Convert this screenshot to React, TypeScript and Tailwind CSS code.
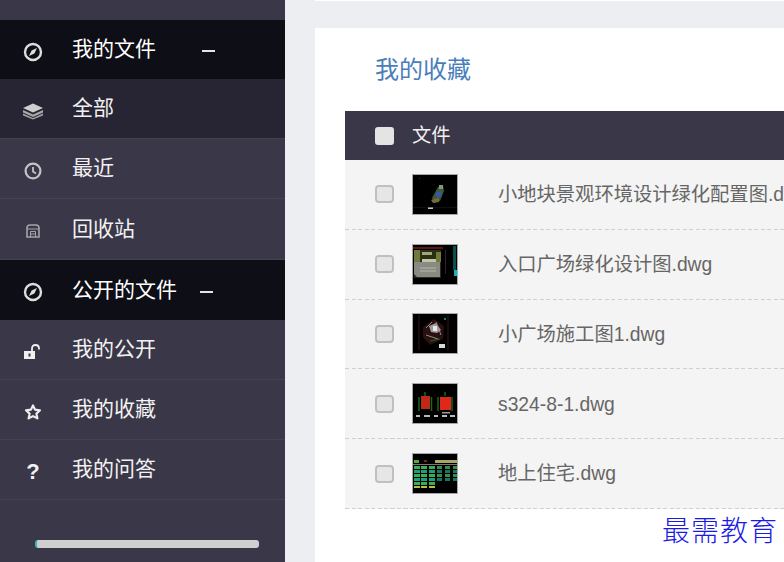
const font = "font-['Liberation_Sans','Noto_Sans_CJK_SC',sans-serif]";

function Compass() {
  return (
    <svg width="20" height="20" viewBox="0 0 20 20" fill="none">
      <circle cx="10" cy="10" r="8" stroke="#dedede" strokeWidth="2.4" />
      <path d="M6 14 L8.6 8.6 L14 6 L11.4 11.4 Z" fill="#dedede" />
    </svg>
  );
}
function Layers() {
  return (
    <svg width="20" height="20" viewBox="0 0 20 20">
      <path d="M10 2.5 L20 7 L10 11.5 L0 7 Z" fill="#cfcfcf" />
      <path d="M0 9 L10 13.5 L20 9 V11.5 L10 16 L0 11.5 Z" fill="#a8a8a8" />
      <path d="M0 12.5 L10 17 L20 12.5 V14.5 L10 18.5 L0 14.5 Z" fill="#a0a0a0" />
    </svg>
  );
}
function Clock() {
  return (
    <svg width="18" height="18" viewBox="0 0 18 18" fill="none">
      <circle cx="9" cy="9" r="7.4" stroke="#c4c4c4" strokeWidth="2.2" />
      <path d="M9 5 V9.5 L12 11.5" stroke="#c4c4c4" strokeWidth="1.8" />
    </svg>
  );
}
function Bin() {
  return (
    <svg width="14" height="14" viewBox="0 0 14 14" fill="none">
      <path d="M1 13 V4 Q1 1 4 1 H10 Q13 1 13 4 V13 Z" stroke="#a4a4a4" strokeWidth="1.6" />
      <path d="M1 5 H13 M4.5 7.5 H9.5 V13 M4.5 7.5 V13 M4.5 10 H9.5" stroke="#a4a4a4" strokeWidth="1" />
    </svg>
  );
}
function Unlock() {
  return (
    <svg width="18" height="16" viewBox="0 0 18 16">
      <path d="M0 7 H11 V15 H0 Z" fill="#f0f0f0" />
      <rect x="4.5" y="9.5" width="2" height="3" fill="#3a3748" />
      <path d="M8 7 V4.5 Q8 1 11.5 1 Q15 1 15 4.5 V5.5" fill="none" stroke="#f0f0f0" strokeWidth="1.8" />
    </svg>
  );
}
function Star() {
  return (
    <svg width="18" height="18" viewBox="0 0 18 18" fill="none">
      <path d="M9 2.4 L11 6.6 L16 7.3 L12.4 10.6 L13.4 15.4 L9 13.1 L4.6 15.4 L5.6 10.6 L2 7.3 L7 6.6 Z" stroke="#eeeeee" strokeWidth="2.2" strokeLinejoin="round" />
    </svg>
  );
}

function Row({ icon, label, dark, h = "h-[60px]" }: { icon: React.ReactNode; label: string; dark?: boolean; h?: string }) {
  return (
    <div className={`flex items-center border-b border-[#46434f] ${h} ${dark ? "bg-[#272533]" : ""}`}>
      <div className="flex w-[72px] justify-center pt-[4px] pr-[6px]">{icon}</div>
      <span className="mb-[2px] text-[21px] leading-none text-[#f1f1f1]">{label}</span>
    </div>
  );
}

function Head({ label, dashGap, h }: { label: string; dashGap: string; h: string }) {
  return (
    <div className={`flex items-center bg-[#0e0e16] ${h}`}>
      <div className="flex w-[72px] justify-center pt-[4px] pr-[6px]"><Compass /></div>
      <span className="mb-[2px] text-[21px] leading-none text-white">{label}</span>
      <span className={`mt-[3px] h-[2px] w-[13px] bg-[#e4e4e4] ${dashGap}`} />
    </div>
  );
}

function Thumb({ kind }: { kind: number }) {
  return (
    <svg width="46" height="41" viewBox="0 0 46 41" className="shrink-0">
      <rect width="46" height="41" fill="#000" />
      <g className="blur-[0.5px]">
        {kind === 0 && (
          <g>
            <path d="M20 24 L26 13 L31 11 L32 17 L28 27 L22 29 Z" fill="#3f5a36" />
            <path d="M24 19 L29 17 L29 22 L25 24 Z" fill="#3558b8" />
            <path d="M27 11 L31 11 L31 15 L27 15 Z" fill="#7f9a72" />
            <path d="M19 26 L27 24 L27 28 L21 29 Z" fill="#7a6a3a" />
            <rect x="16" y="33" width="5" height="2" fill="#c4c4c4" />
            <rect x="7" y="4" width="1" height="1" fill="#333" />
            <rect x="1" y="33" width="44" height="0.5" fill="#222" />
          </g>
        )}
        {kind === 1 && (
          <g>
            <rect x="0" y="3" width="31" height="2" fill="#5c1616" />
            <path d="M2 6 H29 V34 H2 Z" fill="#2a3014" />
            <path d="M2 18 H28 V33 H5 L2 30 Z" fill="#8a8a84" />
            <path d="M2 6 H8 V18 H2 Z M24 8 H29 V18 H24 Z" fill="#6f7a3c" />
            <path d="M10 8 H20 V11 H10 Z" fill="#a4a47c" />
            <rect x="10" y="15" width="14" height="3" fill="#c4c4a4" />
            <path d="M8 24 H24 M8 27 H24" stroke="#b8b8a8" />
            <rect x="33" y="6" width="1" height="24" fill="#3a1a3a" />
            <rect x="41" y="2" width="3" height="24" fill="#0b4f4f" />
            <rect x="42" y="26" width="4" height="6" fill="#12b5b5" />
          </g>
        )}
        {kind === 2 && (
          <g>
            <path d="M7 2 V37 M36 2 V37" stroke="#3a1414" strokeWidth="1" />
            <path d="M11 14 L22 6 L32 13 L31 26 L18 32 L11 24 Z" fill="#2c1010" />
            <path d="M14 15 L20 9 M14 22 L26 26 M24 9 L29 22" stroke="#8a8a8a" strokeWidth="1" />
            <path d="M17 13 L24 10 L29 17 L25 20 L19 19 Z" fill="#9c9c9c" />
            <rect x="21" y="13" width="4" height="5" fill="#e8e8e8" />
            <rect x="27" y="31" width="6" height="4" fill="#d8d8d8" />
            <path d="M18 28 L28 26" stroke="#1d6a1d" />
            <rect x="32" y="5" width="2" height="2" fill="#11807f" />
          </g>
        )}
        {kind === 3 && (
          <g>
            <rect x="9" y="13" width="9" height="13" fill="#c02818" />
            <rect x="28" y="14" width="11" height="13" fill="#e02818" />
            <path d="M7 14 V28 M19.5 14 V28 M26 14 V28 M40 14 V28 M13 9 V13 M33 9 V13" stroke="#176a17" strokeWidth="1.5" />
            <path d="M4 33 H8 M12 33 H18 M22 33 H26 M30 33 H35 M38 33 H43" stroke="#b8b8b8" strokeWidth="2" />
            <rect x="30" y="29" width="8" height="1.5" fill="#999" />
          </g>
        )}
        {kind === 4 && (
          <g>
            <rect x="2" y="7" width="5" height="3" fill="#5caa30" />
            <rect x="12" y="7" width="3" height="2" fill="#8a1a1a" />
            <rect x="23" y="7" width="23" height="3" fill="#a8a860" />
            <rect x="0" y="11" width="46" height="1" fill="#777" />
            {[2, 9, 17].map((x) => (
              <g key={x}>
                {[13, 17, 21, 25, 29].map((y, i) => (
                  <rect key={y} x={x} y={y} width="6" height="3" fill={i % 2 ? "#18a080" : "#38b050"} />
                ))}
                <rect x={x} y="33" width="6" height="2" fill="#b8c040" />
              </g>
            ))}
            {[25, 33, 41].map((x) => (
              <g key={x}>
                {[13, 17, 21, 25].map((y, i) => (
                  <rect key={y} x={x} y={y} width="5" height="3" fill={i % 2 ? "#0f7a62" : "#3a8a50"} />
                ))}
              </g>
            ))}
          </g>
        )}
      </g>
    </svg>
  );
}

function Check() {
  return <span className="h-[18px] w-[19px] shrink-0 rounded-[4px] border-2 border-[#c0c0c0] bg-[#e6e6e6]" />;
}

const files = [
  "小地块景观环境设计绿化配置图.dwg",
  "入口广场绿化设计图.dwg",
  "小广场施工图1.dwg",
  "s324-8-1.dwg",
  "地上住宅.dwg",
];

export default function App() {
  return (
    <div className={`relative flex h-[562px] w-[784px] overflow-hidden bg-[#eceef1] ${font}`}>
      <aside className="flex w-[285px] shrink-0 flex-col bg-[#3a3748]">
        <div className="h-[20px] shrink-0" />
        <Head label="我的文件" dashGap="ml-[46px]" h="h-[59px]" />
        <Row icon={<Layers />} label="全部" dark />
        <Row icon={<Clock />} label="最近" />
        <Row icon={<Bin />} label="回收站" h="h-[61px]" />
        <Head label="公开的文件" dashGap="ml-[23px]" h="h-[60px]" />
        <Row icon={<Unlock />} label="我的公开" />
        <Row icon={<Star />} label="我的收藏" />
        <Row icon={<span className="text-[22px] font-bold leading-none text-[#f1f1f1]">?</span>} label="我的问答" />
        <div className="mt-[40px] ml-[35px] h-[8px] w-[224px] rounded-[3px] border-l-2 border-[#35b8b8] bg-[#cfcfcf]" />
      </aside>
      <div className="ml-[30px] flex min-w-0 flex-1 flex-col">
        <div className="h-px shrink-0 bg-white" />
        <div className="mt-[27px] min-h-0 flex-1 overflow-hidden bg-white pl-[30px]">
          <div className="flex h-[83px] items-center pl-[30px] text-[24px] leading-none text-[#4a7ebb]">我的收藏</div>
          <div className="w-[600px]">
            <div className="flex h-[49px] items-center bg-[#3a3748] pl-[30px]">
              <span className="h-[18px] w-[19px] rounded-[3px] bg-[#e4e4e4]" />
              <span className="ml-[18px] text-[19.3px] leading-none text-[#f1f1f1]">文件</span>
            </div>
            {files.map((f, i) => (
              <div key={f} className="flex h-[69.8px] flex-col bg-[#f4f4f4]">
                <div className="flex flex-1 items-center pl-[30px]">
                  <Check />
                  <span className="ml-[18px] flex outline outline-1 -outline-offset-1 outline-[#a8a8a8]"><Thumb kind={i} /></span>
                  <span className="ml-[40px] mt-[1px] whitespace-nowrap text-[19.3px] leading-none text-[#666]">{f}</span>
                </div>
                <div className="h-px shrink-0 bg-[repeating-linear-gradient(90deg,#cfcfcf_0,#cfcfcf_4px,transparent_4px,transparent_6.5px)]" />
              </div>
            ))}
          </div>
        </div>
      </div>
      <div className="absolute left-[662px] top-[515px] font-['Noto_Sans_CJK_SC',serif] text-[28px] font-light leading-none tracking-[1px] text-[#1a1ae6]">最需教育</div>
    </div>
  );
}
